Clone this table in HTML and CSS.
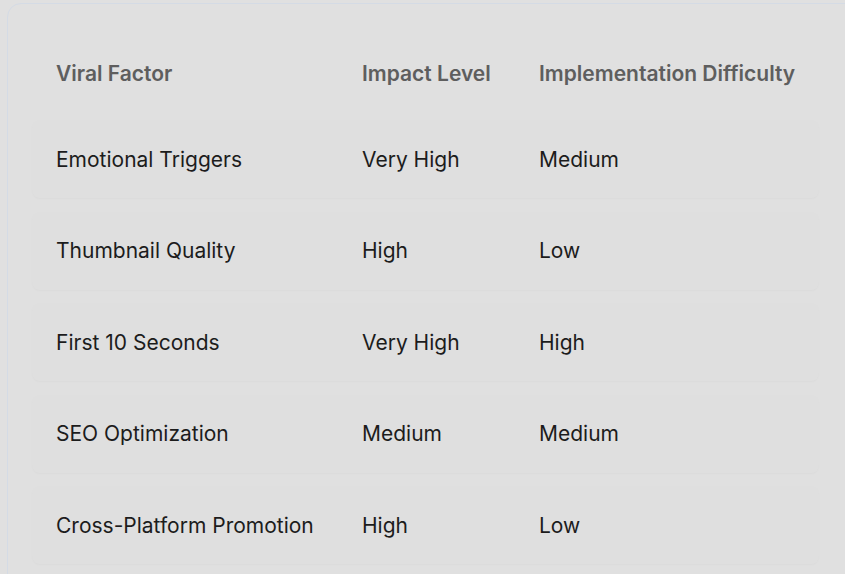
FILE: index.html
```html
<!DOCTYPE html>
<html>
<head>
<meta charset="utf-8">
<link rel="stylesheet" href="styles.css">
</head>
<body>
<div class="card">
  <div class="table">
    <div class="row head">
      <div class="c1">Viral Factor</div>
      <div class="c2">Impact Level</div>
      <div class="c3">Implementation Difficulty</div>
    </div>
    <div class="rows">
      <div class="row body">
        <div class="c1">Emotional Triggers</div>
        <div class="c2">Very High</div>
        <div class="c3">Medium</div>
      </div>
      <div class="row body">
        <div class="c1">Thumbnail Quality</div>
        <div class="c2">High</div>
        <div class="c3">Low</div>
      </div>
      <div class="row body">
        <div class="c1">First 10 Seconds</div>
        <div class="c2">Very High</div>
        <div class="c3">High</div>
      </div>
      <div class="row body">
        <div class="c1">SEO Optimization</div>
        <div class="c2">Medium</div>
        <div class="c3">Medium</div>
      </div>
      <div class="row body">
        <div class="c1">Cross-Platform Promotion</div>
        <div class="c2">High</div>
        <div class="c3">Low</div>
      </div>
    </div>
  </div>
</div>
</body>
</html>
```
FILE: styles.css
```css
html, body {
  margin: 0;
  background: #e0e0e0;
  overflow: hidden;
  height: 574px;
}
body {
  font-family: Inter, "Noto Sans", sans-serif;
}
.card {
  margin: 3px 0 0 7px;
  width: 900px;
  height: 700px;
  box-sizing: border-box;
  border: 1px solid #d4dbe5;
  border-radius: 14px;
  background: #e0e0e0;
  padding: 30px 0 0 24px;
}
.table {
  width: 787px;
}
.row {
  display: grid;
  grid-template-columns: 306px 177px 1fr;
  align-items: center;
  height: 78px;
  padding: 0;
  box-sizing: border-box;
  font-size: 21px;
}
.row > div {
  padding-left: 24px;
  white-space: nowrap;
}
.head {
  color: #5e5e5e;
  font-weight: 600;
  margin-bottom: 8px;
}
.rows {
  display: flex;
  flex-direction: column;
  gap: 13.5px;
}
.body {
  color: #1c1c1c;
  background: #dfdfdf;
  border-radius: 8px;
  box-shadow: 0 1px 2px rgba(0, 0, 0, 0.025);
}
```
